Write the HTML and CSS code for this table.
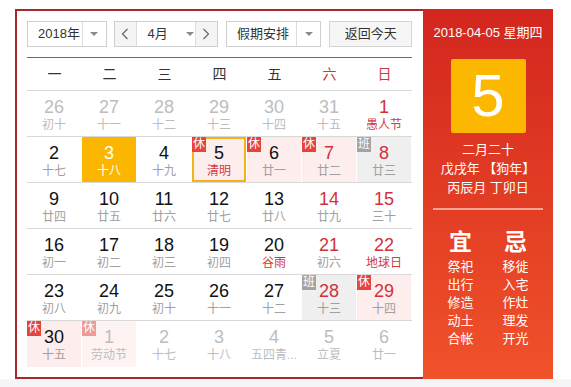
FILE: index.html
```html
<!DOCTYPE html>
<html lang="zh">
<head>
<meta charset="utf-8">
<link rel="stylesheet" href="styles.css">
</head>
<body>
<div class="page">
  <div class="calendar">
    <div class="main">
      <div class="toolbar">
        <div class="select year"><span class="label">2018年</span><span class="drop"><i class="tri"></i></span></div>
        <div class="select month">
          <span class="nav"><svg width="8" height="12" viewBox="0 0 8 12"><polyline points="6.5,1 1.5,6 6.5,11" fill="none" stroke="#666" stroke-width="1.2"/></svg></span>
          <span class="mlabel">4月<i class="tri"></i></span>
          <span class="nav"><svg width="8" height="12" viewBox="0 0 8 12"><polyline points="1.5,1 6.5,6 1.5,11" fill="none" stroke="#666" stroke-width="1.2"/></svg></span>
        </div>
        <div class="select holiday"><span class="label">假期安排</span><span class="drop"><i class="tri"></i></span></div>
        <div class="btn">返回今天</div>
      </div>
      <div class="weekdays">
        <span>一</span><span>二</span><span>三</span><span>四</span><span>五</span><span class="we">六</span><span class="we">日</span>
      </div>
      <div class="row">
        <div class="cell other"><b>26</b><em>初十</em></div>
        <div class="cell other"><b>27</b><em>十一</em></div>
        <div class="cell other"><b>28</b><em>十二</em></div>
        <div class="cell other"><b>29</b><em>十三</em></div>
        <div class="cell other"><b>30</b><em>十四</em></div>
        <div class="cell other"><b>31</b><em>十五</em></div>
        <div class="cell red"><b>1</b><em class="fest">愚人节</em></div>
      </div>
      <div class="row">
        <div class="cell"><b>2</b><em>十七</em></div>
        <div class="cell selected"><b>3</b><em>十八</em></div>
        <div class="cell"><b>4</b><em>十九</em></div>
        <div class="cell rest today"><i class="badge">休</i><b>5</b><em class="fest">清明</em></div>
        <div class="cell rest"><i class="badge">休</i><b>6</b><em>廿一</em></div>
        <div class="cell rest red"><i class="badge">休</i><b>7</b><em>廿二</em></div>
        <div class="cell work red"><i class="badge">班</i><b>8</b><em>廿三</em></div>
      </div>
      <div class="row">
        <div class="cell"><b>9</b><em>廿四</em></div>
        <div class="cell"><b>10</b><em>廿五</em></div>
        <div class="cell"><b>11</b><em>廿六</em></div>
        <div class="cell"><b>12</b><em>廿七</em></div>
        <div class="cell"><b>13</b><em>廿八</em></div>
        <div class="cell red"><b>14</b><em>廿九</em></div>
        <div class="cell red"><b>15</b><em>三十</em></div>
      </div>
      <div class="row">
        <div class="cell"><b>16</b><em>初一</em></div>
        <div class="cell"><b>17</b><em>初二</em></div>
        <div class="cell"><b>18</b><em>初三</em></div>
        <div class="cell"><b>19</b><em>初四</em></div>
        <div class="cell"><b>20</b><em class="fest">谷雨</em></div>
        <div class="cell red"><b>21</b><em>初六</em></div>
        <div class="cell red"><b>22</b><em class="fest">地球日</em></div>
      </div>
      <div class="row">
        <div class="cell"><b>23</b><em>初八</em></div>
        <div class="cell"><b>24</b><em>初九</em></div>
        <div class="cell"><b>25</b><em>初十</em></div>
        <div class="cell"><b>26</b><em>十一</em></div>
        <div class="cell"><b>27</b><em>十二</em></div>
        <div class="cell work red"><i class="badge">班</i><b>28</b><em>十三</em></div>
        <div class="cell rest red"><i class="badge">休</i><b>29</b><em>十四</em></div>
      </div>
      <div class="row last">
        <div class="cell rest"><i class="badge">休</i><b>30</b><em>十五</em></div>
        <div class="cell rest other faded"><i class="badge">休</i><b>1</b><em>劳动节</em></div>
        <div class="cell other"><b>2</b><em>十七</em></div>
        <div class="cell other"><b>3</b><em>十八</em></div>
        <div class="cell other"><b>4</b><em>五四青...</em></div>
        <div class="cell other"><b>5</b><em>立夏</em></div>
        <div class="cell other"><b>6</b><em>廿一</em></div>
      </div>
    </div>
    <div class="side">
      <div class="sdate">2018-04-05 星期四</div>
      <div class="bigday">5</div>
      <div class="lunar">
        <div>二月二十</div>
        <div>戊戌年 【狗年】</div>
        <div>丙辰月 丁卯日</div>
      </div>
      <div class="sep"></div>
      <div class="yiji">
        <div class="col">
          <div class="head">宜</div>
          <div>祭祀</div><div>出行</div><div>修造</div><div>动土</div><div>合帐</div>
        </div>
        <div class="col">
          <div class="head">忌</div>
          <div>移徙</div><div>入宅</div><div>作灶</div><div>理发</div><div>开光</div>
        </div>
      </div>
    </div>
  </div>
  <div class="footer"></div>
</div>
</body>
</html>
```

FILE: styles.css
```css
* { box-sizing: border-box; margin: 0; padding: 0; }
html, body { background: #fff; }
body {
  font-family: "Liberation Sans", "Noto Sans CJK SC", sans-serif;
  color: #333;
  width: 571px;
  height: 387px;
  overflow: hidden;
}
.page { padding-top: 9px; }
.calendar {
  display: flex;
  margin-left: 15px;
  width: 538px;
  height: 370px;
}
.main {
  width: 408px;
  border: 2px solid #a8272b;
  border-right: none;
  padding: 10px 11px 10px 10px;
}
.toolbar {
  display: flex;
  padding-bottom: 10px;
  border-bottom: 1px solid #c8433f;
  box-sizing: content-box;
  height: 26px;
}
.select {
  display: flex;
  height: 26px;
  border: 1px solid #cfcfcf;
  background: #fff;
  font-size: 13px;
  line-height: 24px;
  color: #333;
}
.select .label { flex: 1; padding-left: 10px; }
.select .drop {
  width: 24px;
  border-left: 1px solid #dedede;
  display: flex;
  align-items: center;
  justify-content: center;
}
.tri {
  display: inline-block;
  width: 0; height: 0;
  border-left: 4px solid transparent;
  border-right: 4px solid transparent;
  border-top: 4px solid #8a8a8a;
}
.year { width: 80px; }
.month { width: 105px; margin-left: 7px; }
.holiday { width: 96px; margin-left: 8px; }
.month .nav {
  width: 22px;
  background: #f4f4f4;
  display: flex;
  align-items: center;
  justify-content: center;
}
.month .nav:first-child { border-right: 1px solid #dedede; }
.month .nav:last-child { border-left: 1px solid #dedede; }
.mlabel {
  flex: 1;
  padding-left: 11px;
  display: flex;
  align-items: center;
}
.mlabel .tri { margin-left: 18px; }
.btn {
  margin-left: 8px;
  width: 83px;
  height: 26px;
  border: 1px solid #d4d4d4;
  background: #f6f6f6;
  font-size: 13px;
  line-height: 24px;
  text-align: center;
  color: #333;
}
.weekdays {
  display: grid;
  grid-template-columns: repeat(7, 55px);
  height: 33px;
  border-bottom: 1px solid #d8d8d8;
  font-size: 14px;
  line-height: 32px;
  text-align: center;
  color: #333;
}
.weekdays .we { color: #c8383c; }
.row {
  display: grid;
  grid-template-columns: repeat(7, 54px);
  column-gap: 1px;
  height: 46px;
  border-bottom: 1px solid #d8d8d8;
}
.row.last { border-bottom: none; }
.cell {
  position: relative;
  text-align: center;
  padding-top: 6px;
}
.cell b {
  display: block;
  font-weight: normal;
  font-size: 18px;
  line-height: 20px;
  color: #111;
}
.cell em {
  display: block;
  font-style: normal;
  font-size: 12px;
  line-height: 15px;
  margin-top: 1px;
  color: #a0a0a0;
  white-space: nowrap;
}
.cell.red b { color: #d2313a; }
.cell em.fest { color: #cf3a3e; }
.cell.other b, .cell.other em { color: #bdbdbd; }
.cell.rest { background: #fdeded; }
.cell.work { background: #efefef; }
.cell.selected { background: #fbb700; }
.cell.selected b, .cell.selected em { color: #fff; }
.cell.today { border: 2px solid #f4b21a; padding-top: 4px; }
.cell.faded { background: #fdf3f3; }
.cell.faded .badge { background: #f09a95; }
.badge {
  position: absolute;
  top: 0; left: 0;
  width: 14px;
  height: 15px;
  font-style: normal;
  font-size: 12px;
  line-height: 14px;
  color: #fff;
  background: #e5433b;
  text-align: center;
}
.cell.today .badge { top: -2px; left: -2px; }
.cell.work .badge { background: #a3a3a3; }
.side {
  width: 130px;
  background: linear-gradient(#d3261e, #f0522a);
  color: #fff;
  display: flex;
  flex-direction: column;
  align-items: center;
}
.sdate {
  font-size: 13px;
  line-height: 16px;
  margin-top: 16px;
}
.bigday {
  margin-top: 18px;
  width: 75px;
  height: 74px;
  background: #fcb800;
  font-size: 60px;
  line-height: 74px;
  text-align: center;
  border-radius: 2px;
}
.lunar {
  margin-top: 7px;
  font-size: 13px;
  line-height: 19px;
  text-align: center;
}
.sep {
  margin-top: 11px;
  width: 110px;
  height: 2px;
  background: rgba(255, 200, 190, 0.75);
}
.yiji {
  display: flex;
  margin-top: 19px;
}
.yiji .col {
  width: 55px;
  text-align: center;
  font-size: 13px;
  line-height: 18px;
}
.yiji .head {
  font-size: 23px;
  font-weight: 600;
  line-height: 26px;
  margin-bottom: 3px;
}
.footer {
  height: 8px;
  background: #f5f5f7;
}
```
